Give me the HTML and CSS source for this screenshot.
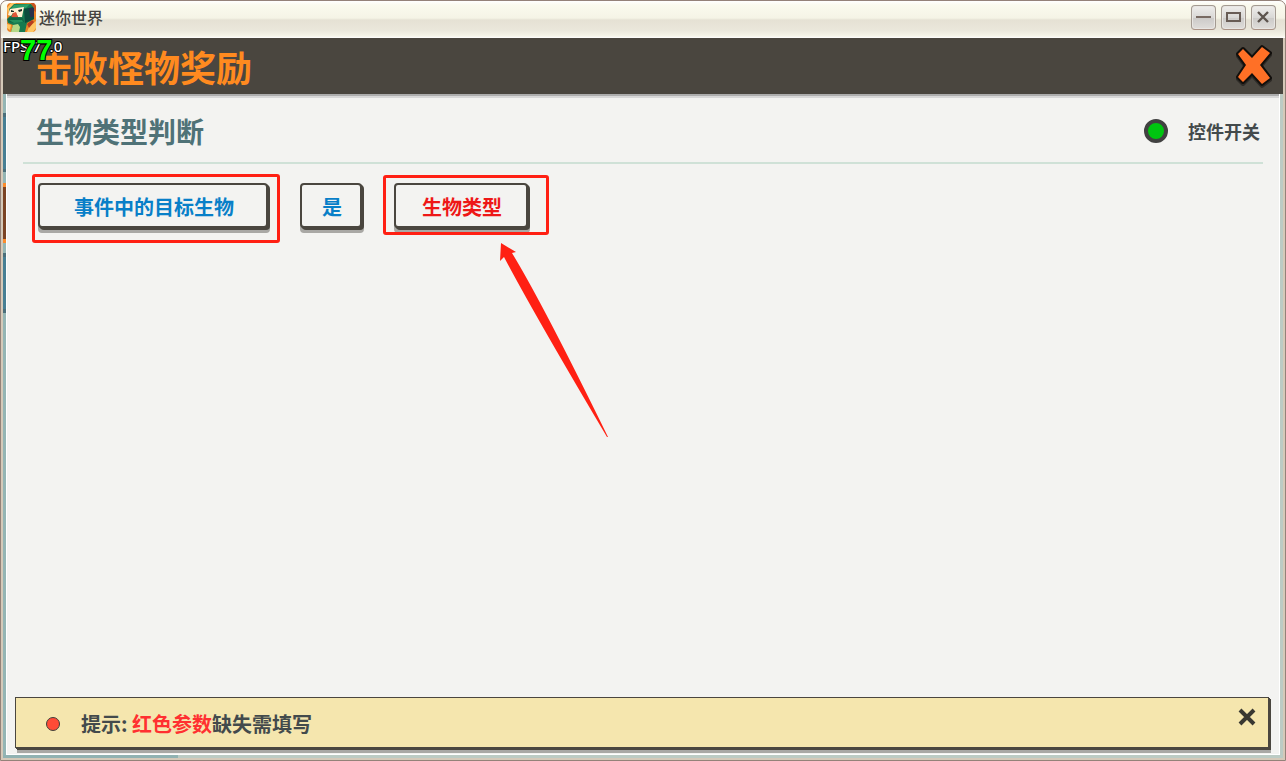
FILE: index.html
```html
<!DOCTYPE html>
<html lang="zh-CN">
<head>
    <meta charset="UTF-8">
    <meta name="viewport" content="width=device-width, initial-scale=1.0">
    <title>迷你世界</title>
    <link rel="stylesheet" href="styles.css">
</head>
<body>
    <div class="window">
        <div class="titlebar">
            <svg class="app-icon" viewBox="0 0 29 29" aria-hidden="true">
                <rect width="29" height="29" rx="4" fill="#ea8425"/>
                <path d="M0 5L4 0H9L2 7L1 13ZM0 21L4 22L3 27L0 25ZM22 24L29 18V25L26 29H20Z" fill="#ffc663"/>
                <path d="M24 0H27L29 3V9L26 7Z" fill="#c85422"/>
                <path d="M7 1L24 1L27 5L27 16L20 20L18 29H4L6 22L1 20L0 16L3 13L2 6Z" fill="#177a50"/>
                <path d="M7 2L23 1L19 5L4 6Z" fill="#2da068"/>
                <path d="M17 6L26 4L27 16L18 20Z" fill="#0c4b3d"/>
                <path d="M22 5L27 5V14L23 14Z" fill="#27304a"/>
                <path d="M3 6L17 4L15 14L11 14L9 10L6 10L4 13L1 12Z" fill="#fff1d2"/>
                <path d="M6 10L9 9L11 14L4 15Z" fill="#df5638"/>
                <path d="M4 7L7 8V9L4 9ZM11 7L15 6V8L12 9Z" fill="#1d2e29"/>
                <path d="M1 16L4 14L16 15L17 19L7 20L2 19Z" fill="#0f6544"/>
                <path d="M2 17L15 17L16 19L7 20Z" fill="#23915d"/>
                <path d="M6 22L11 21L13 24L12 29H4Z" fill="#b5d987"/>
                <path d="M20 21L25 17L27 19L22 25Z" fill="#b63d20"/>
            </svg>
            <span class="app-name">迷你世界</span>
            <div class="window-controls">
                <button class="window-btn" type="button" aria-label="最小化">
                    <svg viewBox="0 0 23 23"><path d="M4 11H19" stroke="#786a62" stroke-width="2"/></svg>
                </button>
                <button class="window-btn" type="button" aria-label="最大化">
                    <svg viewBox="0 0 23 23"><rect x="5" y="7" width="13" height="8" fill="none" stroke="#685c55" stroke-width="2"/></svg>
                </button>
                <button class="window-btn" type="button" aria-label="关闭">
                    <svg viewBox="0 0 23 23"><path d="M6 6L16 16M16 6L6 16" stroke="#5d544e" stroke-width="2.4"/></svg>
                </button>
            </div>
        </div>

        <div class="game">
            <header class="game-header">
                <h1>击败怪物奖励</h1>
                <button class="close-btn" type="button" aria-label="关闭">
                    <svg viewBox="0 0 38 44">
                        <path d="M8 7L3 12L11 23L3 35L8 40L17 31L27 42L35 36L25 23L35 11L27 5L17 16Z" fill="#2e2b27" stroke="#2e2b27" stroke-width="4" stroke-linejoin="round"/>
                        <path class="close-cross" d="M8 5L3 10L11 21L3 33L8 38L17 29L27 40L35 34L25 21L35 9L27 3L17 14Z" fill="#ff7026" stroke="#120f0c" stroke-width="4" stroke-linejoin="round"/>
                    </svg>
                </button>
                <span class="fps">FPS:77.0</span>
                <span class="fps-big">77</span>
            </header>

            <div class="game-body">
                <main class="panel">
                    <div class="section-head">
                        <h2>生物类型判断</h2>
                        <label class="switch">
                            <input type="checkbox" checked>
                            控件开关
                        </label>
                    </div>

                    <div class="params">
                        <div class="param mark-target">
                            <button class="param-btn param-target" type="button">事件中的目标生物</button>
                        </div>
                        <div class="param">
                            <button class="param-btn param-is" type="button">是</button>
                        </div>
                        <div class="param mark-type">
                            <button class="param-btn param-type missing" type="button">生物类型</button>
                            <svg class="arrow" viewBox="0 0 110 196" aria-hidden="true">
                                <path d="M2 1L17 10L13 11Q44 62 109 195L108 195Q35 72 5 15L1 19Z" fill="#ff2013"/>
                            </svg>
                        </div>
                    </div>

                    <div class="tip">
                        <span class="tip-dot"></span>
                        <p>提示: <span class="tip-red">红色参数</span>缺失需填写</p>
                        <button class="tip-close" type="button" aria-label="关闭提示">
                            <svg viewBox="0 0 18 18"><path d="M2 2L16 16M16 2L2 16" stroke="#393831" stroke-width="4"/></svg>
                        </button>
                    </div>
                </main>
            </div>
        </div>
    </div>
</body>
</html>
```

FILE: styles.css
```css
* {
    box-sizing: border-box;
}

body {
    margin: 0;
    font-family: "Noto Sans CJK SC", sans-serif;
    font-weight: 700;
    color: #434a4c;
    background-color: #ffffff;
}

h1, h2, p {
    margin: 0;
}

button {
    padding: 0;
    border: none;
    background: none;
    font: inherit;
    cursor: pointer;
}

svg {
    display: block;
}

.window {
    display: flex;
    flex-direction: column;
    min-height: 100vh;
    padding: 0 2px 2px;
    border: 1px solid #948279;
    border-radius: 7px 7px 0 0;
    background-color: #d5c9b9;
    overflow: hidden;
}

/* title bar */
.titlebar {
    display: flex;
    align-items: center;
    gap: 3px;
    height: 37px;
    margin: 0 -2px;
    padding: 0 9px 4px 6px;
    background: linear-gradient(#ffffff, #fafaee 4px, #f5f4e6 17px, #e5e1d4 19px, #eae7db 29px, #f6f5e9 35px, #ffffff);
}

.app-icon {
    width: 29px;
    height: 29px;
}

.app-name {
    font-size: 16px;
    font-weight: 500;
    line-height: 22px;
    padding-bottom: 2px;
    color: #454341;
}

.window-controls {
    display: flex;
    gap: 5px;
    margin-left: auto;
}

.window-btn {
    width: 25px;
    height: 25px;
    border: 1px solid #a39a91;
    border-bottom-color: #aa9184;
    border-radius: 4px;
    background: linear-gradient(#efeeec, #d9d8d6 50%, #cccac8 52%, #dfddda);
    box-shadow: inset 0 0 0 1px #e8e6e3;
}

/* game area */
.game {
    display: flex;
    flex-direction: column;
    flex: 1;
}

.game-header {
    position: relative;
    display: flex;
    align-items: center;
    justify-content: space-between;
    height: 56px;
    padding: 0 10px 0 33px;
    background-color: #4a463f;
}

.game-header h1 {
    font-size: 36px;
    line-height: 56px;
    color: #ff8a1f;
}

.close-btn svg {
    width: 38px;
    height: 44px;
    overflow: visible;
}

.close-cross {
    paint-order: stroke;
}

.fps,
.fps-big {
    position: absolute;
    paint-order: stroke;
    -webkit-text-stroke: 2px #000000;
}

.fps {
    left: 0;
    top: -2px;
    font-family: "Noto Sans", sans-serif;
    font-size: 15px;
    font-weight: 500;
    line-height: 20px;
    color: #ffffff;
}

.fps-big {
    left: 17px;
    top: -4px;
    font-family: "Liberation Sans", sans-serif;
    font-size: 29px;
    line-height: 32px;
    color: #00ff00;
}

/* the editor behind the panel shows as a thin strip round it */
.game-body {
    display: flex;
    flex: 1;
    padding: 0 3px 3px;
    background:
        linear-gradient(#91b2b2, #91b2b2) left bottom / 175px 3px no-repeat,
        linear-gradient(#94b5b4 19px, #4b6f7b 19px, #4b6f7b 23px, #477f94 23px, #477f94 75px, #4b6f7b 75px, #4b6f7b 78px, #94b5b4 78px, #94b5b4 89px, #fb8b2c 89px, #fb8b2c 93px, #7b4324 93px, #7b4324 145px, #fb8b2c 145px, #fb8b2c 149px, #94b5b4 149px, #94b5b4 159px, #4b6f7b 159px, #4b6f7b 163px, #477f94 163px, #477f94 215px, #4b6f7b 215px, #4b6f7b 219px, #94b5b4 219px) left top / 3px 100% no-repeat,
        #bccbc4;
}

.panel {
    display: flex;
    flex-direction: column;
    flex: 1;
    padding: 4px 9px 6px 8px;
    border: 1px solid #ffffff;
    border-top: none;
    background: linear-gradient(#adadad 2px, #d8d8d8 2px, #d8d8d8 4px, #f3f3f1 4px);
}

.section-head {
    display: flex;
    align-items: center;
    justify-content: space-between;
    height: 66px;
    margin: 0 7px 0 8px;
    padding: 2px 3px 0 13px;
    border-bottom: 2px solid #cfe1d7;
}

.section-head h2 {
    font-size: 28px;
    line-height: 40px;
    color: #4f7277;
}

.switch {
    display: flex;
    align-items: center;
    gap: 20px;
    font-size: 18px;
    line-height: 24px;
}

.switch input {
    appearance: none;
    width: 24px;
    height: 24px;
    margin: 0;
    border: 4px solid #414141;
    border-radius: 50%;
    background-color: #b0b0b0;
}

.switch input:checked {
    background-color: #00c510;
}

/* parameter buttons */
.params {
    display: flex;
    gap: 32px;
    padding: 19px 23px;
}

.param {
    position: relative;
}

.param-btn {
    display: block;
    height: 45px;
    padding: 2px 0 0 2px;
    border: 2px solid #4a463f;
    border-radius: 4px;
    background-color: #f3f3f1;
    box-shadow: 1px 1px #4a463f, 2px 2px #4a463f, 0 5px #a9a8a5, 2px 5px #a9a8a5;
    font-size: 20px;
    line-height: 28px;
    color: #087fc8;
}

.param-target {
    width: 230px;
}

.param-is {
    width: 62px;
}

.param-type {
    width: 134px;
}

.missing {
    color: #ee1717;
}

.mark-target::after,
.mark-type::after {
    content: "";
    position: absolute;
    border: 3px solid #ff2013;
    border-radius: 3px;
    pointer-events: none;
}

.mark-target::after {
    inset: -9px -12px -15px -6px;
}

.mark-type::after {
    inset: -8px -21px -7px -11px;
}

.arrow {
    position: absolute;
    left: 105px;
    top: 59px;
    width: 110px;
    height: 196px;
    pointer-events: none;
}

/* bottom tip */
.tip {
    display: flex;
    align-items: center;
    height: 51px;
    margin-top: auto;
    margin-right: 1px;
    padding: 2px 12px 0 30px;
    border: 1px solid #4a463f;
    background-color: #f5e6ae;
    box-shadow: 1px 1px #4a463f, 2px 2px #4a463f, 2px 5px #a9a8a5;
    font-size: 20px;
    line-height: 28px;
}

.tip-dot {
    width: 14px;
    height: 14px;
    margin-right: 21px;
    border: 1px solid #3f3f3a;
    border-radius: 50%;
    background-color: #ff4b36;
}

.tip-red {
    color: #ff3030;
}

.tip-close {
    margin: 0 0 14px auto;
}

.tip-close svg {
    width: 18px;
    height: 18px;
}
```
